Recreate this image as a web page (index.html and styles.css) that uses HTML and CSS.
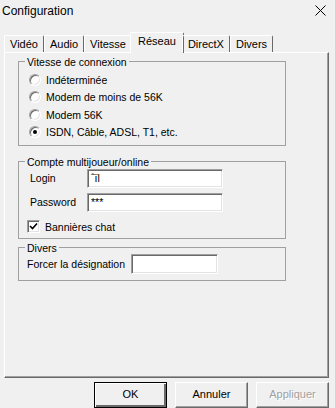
FILE: index.html
```html
<!DOCTYPE html>
<html lang="fr">
<head>
  <meta charset="UTF-8" />
  <title>Configuration</title>
  <link rel="stylesheet" href="styles.css">
</head>
<body>
  <div class="window">
    <div class="titlebar">
      <span class="title">Configuration</span>
      <svg class="close" width="11" height="11" viewBox="0 0 11 11">
        <path d="M0.5 0.5 L10.5 10.5 M10.5 0.5 L0.5 10.5" stroke="#000" stroke-width="1" fill="none"/>
      </svg>
    </div>

    <!-- onglets -->
    <div class="tabs">
      <span class="tab">Vidéo</span>
      <span class="tab">Audio</span>
      <span class="tab">Vitesse</span>
      <span class="tab active">Réseau</span>
      <span class="tab">DirectX</span>
      <span class="tab">Divers</span>
    </div>

    <div class="panel">
      <fieldset class="group speed">
        <legend>Vitesse de connexion</legend>
        <div class="option"><span class="radio"></span>Indéterminée</div>
        <div class="option"><span class="radio"></span>Modem de moins de 56K</div>
        <div class="option"><span class="radio"></span>Modem 56K</div>
        <div class="option"><span class="radio checked"></span>ISDN, Câble, ADSL, T1, etc.</div>
      </fieldset>

      <fieldset class="group account">
        <legend>Compte multijoueur/online</legend>
        <div class="row">
          <span class="label">Login</span>
          <span class="field wide">ˆïl</span>
        </div>
        <div class="row">
          <span class="label">Password</span>
          <span class="field wide">***</span>
        </div>
        <div class="check-row">
          <span class="checkbox">
            <svg width="9" height="9" viewBox="0 0 9 9"><path d="M1 4 L3.5 6.5 L8 1.5" stroke="#000" stroke-width="1.6" fill="none"/></svg>
          </span>
          Bannières chat
        </div>
      </fieldset>

      <fieldset class="group misc">
        <legend>Divers</legend>
        <div class="row">
          <span class="label long">Forcer la désignation</span>
          <span class="field short"></span>
        </div>
      </fieldset>
    </div>

    <div class="actions">
      <button class="btn default">OK</button>
      <button class="btn">Annuler</button>
      <button class="btn" disabled>Appliquer</button>
    </div>
  </div>
</body>
</html>
```

FILE: styles.css
```css
* { box-sizing: border-box; }

body {
  margin: 0;
  background: #f0f0f0;
  font-family: "Liberation Sans", Arial, sans-serif;
  font-size: 10.5px;
  color: #000;
  overflow: hidden;
}

.window {
  width: 335px;
  height: 408px;
  display: flex;
  flex-direction: column;
}

.titlebar {
  height: 22px;
  display: flex;
  align-items: center;
  justify-content: space-between;
  padding: 0 9px 0 2px;
  font-size: 12px;
}

/* onglets */
.tabs {
  height: 30px;
  display: flex;
  align-items: flex-end;
  padding-left: 4px;
  position: relative;
  z-index: 1;
  font-size: 11px;
}
.tab {
  height: 17px;
  line-height: 16px;
  padding: 0 5px;
  border: 1px solid;
  border-color: #fff #696969 transparent #fff;
  border-bottom: none;
  border-radius: 2px 2px 0 0;
}
.tab.active {
  height: 21px;
  line-height: 17px;
  margin: 0 -2px -1px;
  padding: 0 7px;
  background: #f0f0f0;
}

.panel {
  height: 327px;
  margin: 0 6px 0 4px;
  padding: 3px 0 0 13px;
  border: 1px solid;
  border-color: #fff #696969 #696969 #fff;
  box-shadow: inset -1px -1px 0 #a0a0a0;
}

.group {
  width: 268px;
  margin: 0;
  padding: 0 0 0 8px;
  border: 1px solid #a0a0a0;
}
.group legend {
  padding: 0 2px;
  margin-left: -2px;
  line-height: 12px;
}

.speed { padding-top: 3px; padding-bottom: 4px; }
.account { margin-top: 10px; padding-top: 1px; padding-bottom: 3px; }
.misc { margin-top: 3px; padding-bottom: 6px; }

.option {
  height: 17.5px;
  display: flex;
  align-items: center;
  gap: 5px;
  padding-left: 2px;
}
.radio {
  width: 12px;
  height: 12px;
  border-radius: 50%;
  background: #fff;
  border: 1px solid;
  border-color: #a0a0a0 #fff #fff #a0a0a0;
  box-shadow: inset 1px 1px 0 #696969, inset -1px -1px 0 #e3e3e3;
  display: grid;
  place-items: center;
}
.radio.checked::after {
  content: "";
  width: 4px;
  height: 4px;
  border-radius: 50%;
  background: #000;
}

.row {
  display: flex;
  align-items: center;
  padding-left: 3px;
}
.row + .row { margin-top: 5px; }
.label { width: 57px; }
.label.long { width: 104px; }
.misc .row { padding-left: 0; }

.field {
  height: 19px;
  line-height: 17px;
  padding: 0 3px;
  background: #fff;
  border: 1px solid;
  border-color: #a0a0a0 #fff #fff #a0a0a0;
  box-shadow: inset 1px 1px 0 #696969, inset -1px -1px 0 #e3e3e3;
}
.field.wide { width: 136px; }
.field.short { width: 87px; height: 20px; }

.check-row {
  height: 16px;
  margin-top: 7px;
  display: flex;
  align-items: center;
  gap: 5px;
}
.checkbox {
  width: 13px;
  height: 13px;
  background: #fff;
  border: 1px solid;
  border-color: #a0a0a0 #fff #fff #a0a0a0;
  box-shadow: inset 1px 1px 0 #696969, inset -1px -1px 0 #e3e3e3;
  display: grid;
  place-items: center;
}

/* boutons */
.actions {
  display: flex;
  justify-content: flex-end;
  gap: 8px;
  padding: 4px 6px 0 0;
}
.btn {
  width: 73px;
  height: 26px;
  padding: 0 0 3px;
  font: inherit;
  font-size: 11px;
  color: #000;
  background: #f0f0f0;
  border: 1px solid;
  border-color: #fff #696969 #696969 #fff;
  box-shadow: inset -1px -1px 0 #a0a0a0;
}
.btn.default {
  border-color: #000;
  box-shadow: inset 1px 1px 0 #fff, inset -2px -2px 0 #696969;
}
.btn:disabled {
  color: #a0a0a0;
  text-shadow: 1px 1px 0 #fff;
}
```
